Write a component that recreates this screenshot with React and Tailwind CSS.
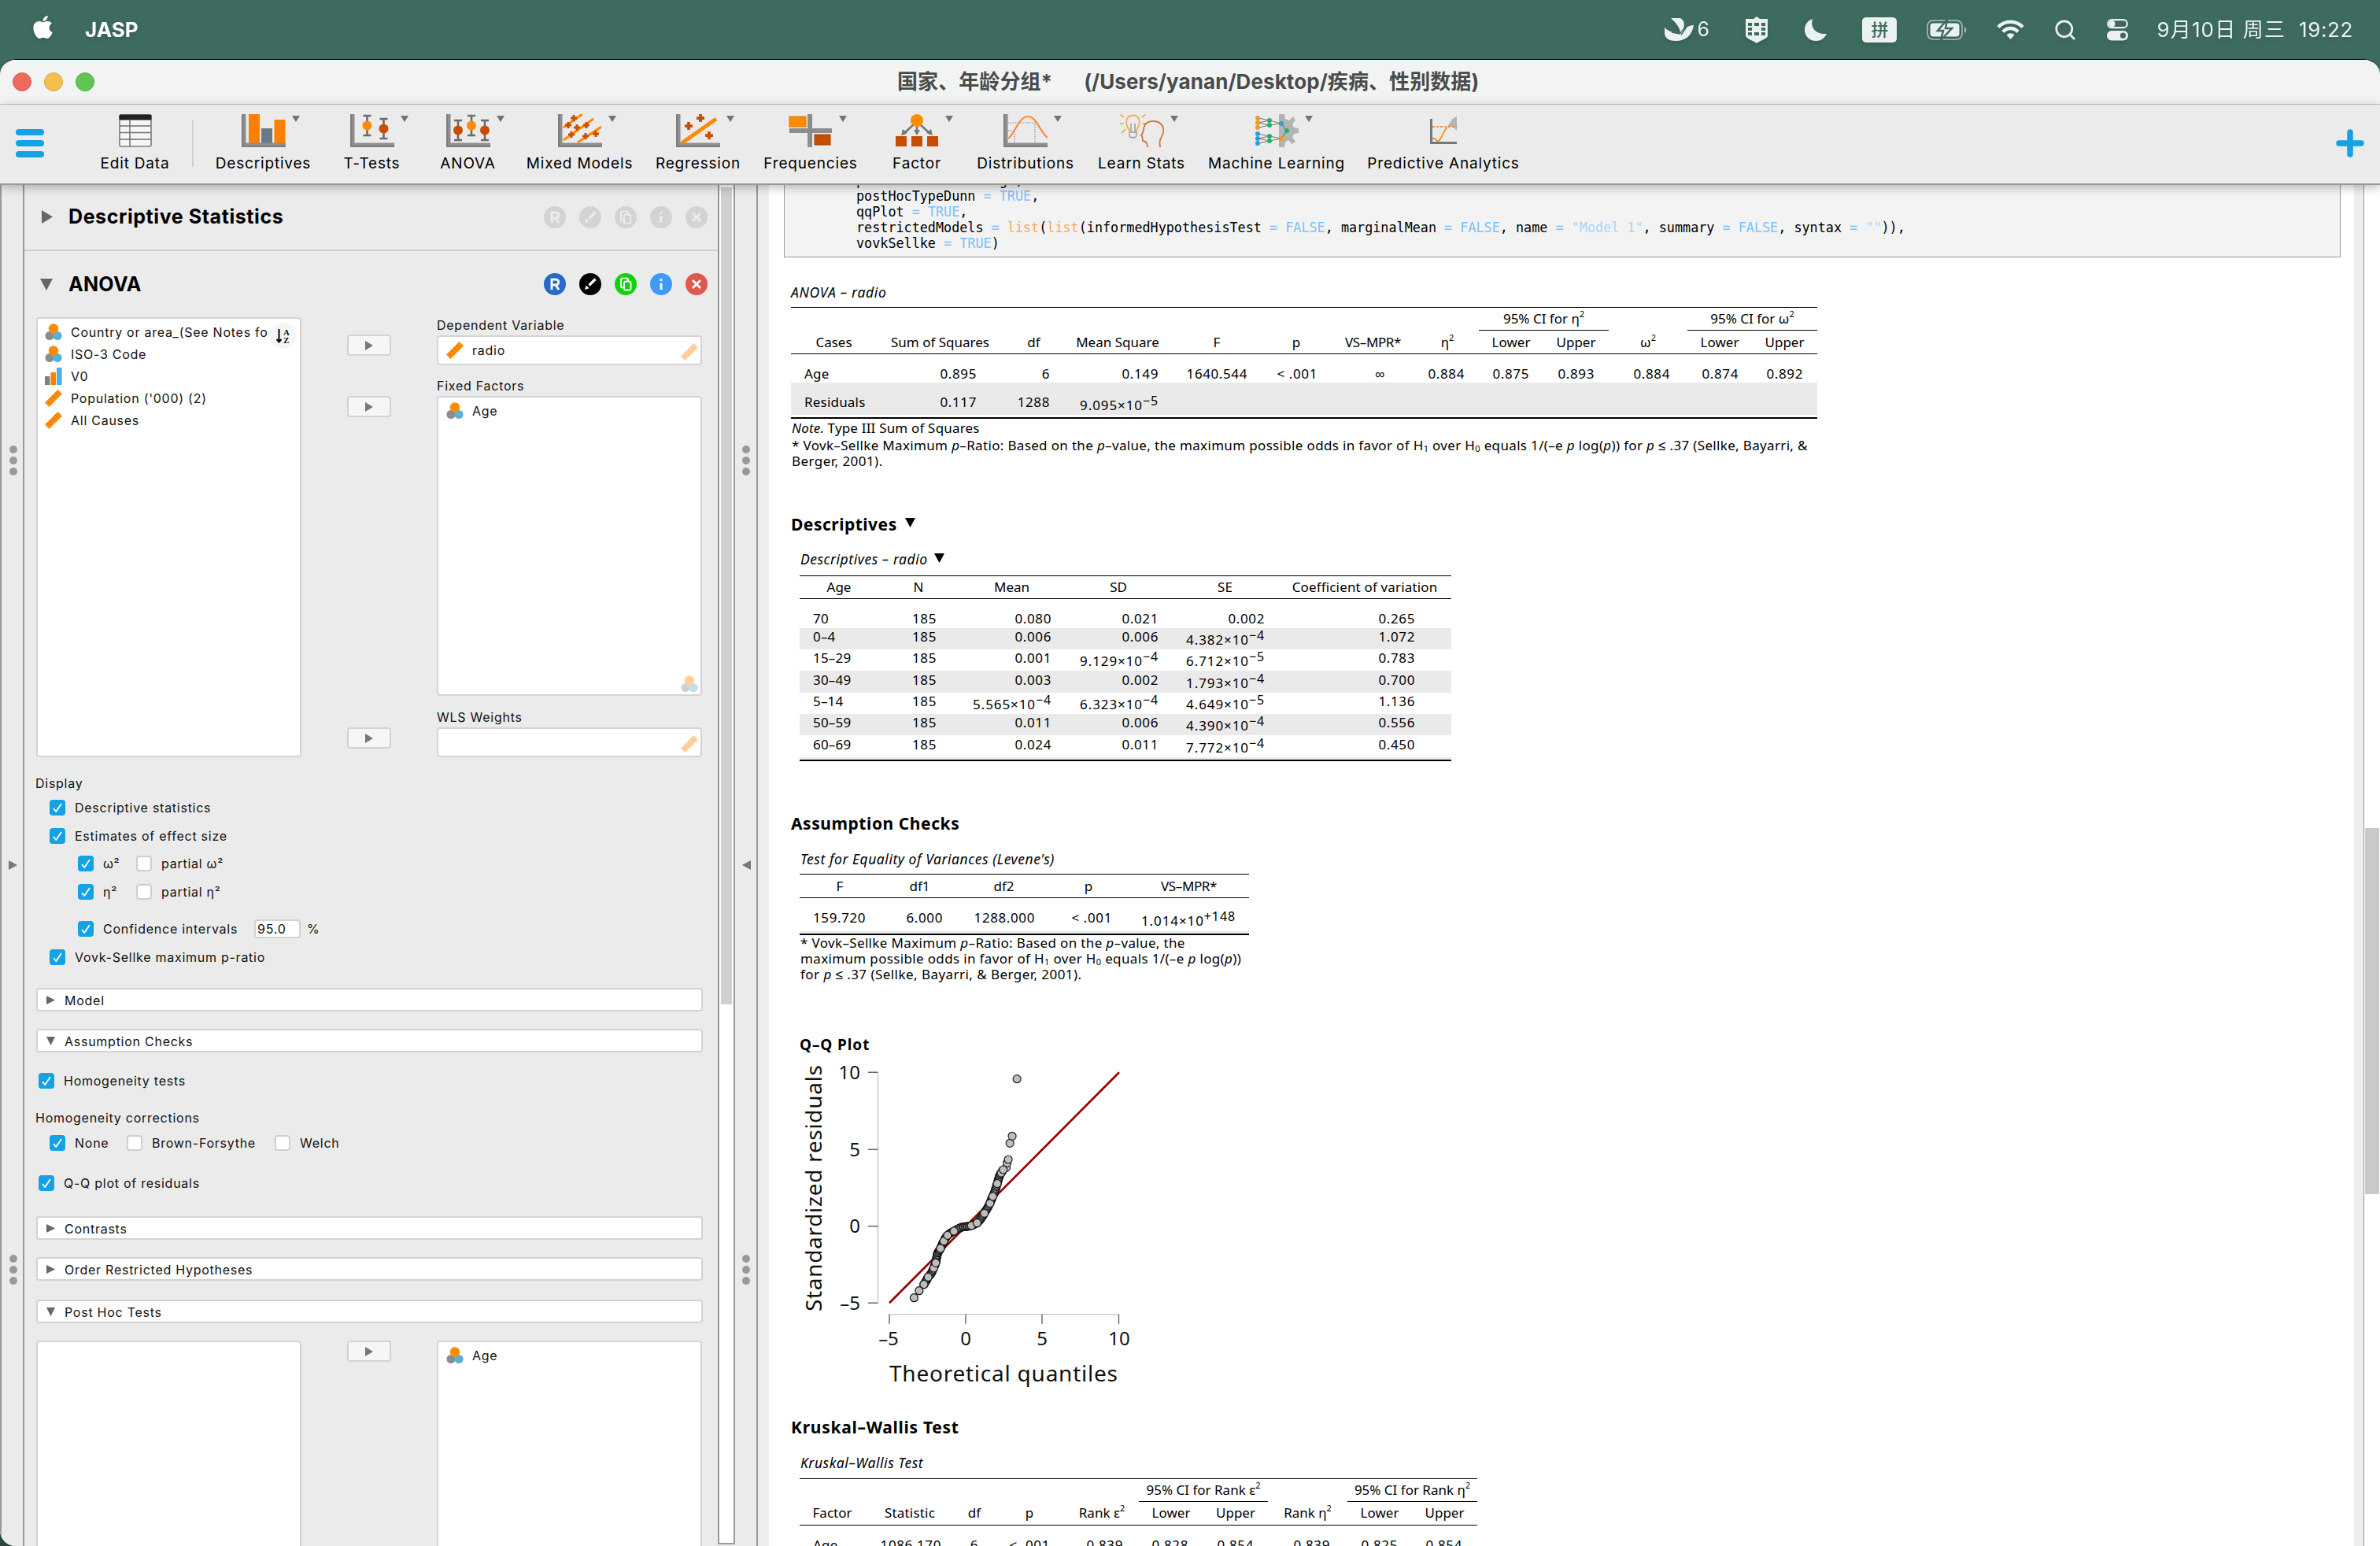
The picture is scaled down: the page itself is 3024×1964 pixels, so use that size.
import React from "react";
import { FaApple } from "react-icons/fa";
import { Search } from "lucide-react";

/* ---------- small shared drawings ---------- */

const Tri = ({ dir = "right", className = "text-[#666]", w = 14, h = 16 }) => (
  <svg width={w} height={h} viewBox="0 0 10 10" preserveAspectRatio="none" className={"shrink-0 " + className} fill="currentColor">
    {dir === "right" && <path d="M0 0 L10 5 L0 10 Z" />}
    {dir === "left" && <path d="M10 0 L0 5 L10 10 Z" />}
    {dir === "down" && <path d="M0 0 L10 0 L5 10 Z" />}
  </svg>
);

const Nominal = ({ className = "" }) => (
  <svg width="22" height="22" viewBox="0 0 22 22" className={"shrink-0 " + className}>
    <circle cx="6" cy="15.5" r="5.6" fill="#8c8c8c" />
    <circle cx="16" cy="15.5" r="5.6" fill="#56b1dc" />
    <circle cx="11" cy="6.5" r="6.2" fill="#ff8c00" />
  </svg>
);

const Ordinal = () => (
  <svg width="22" height="22" viewBox="0 0 22 22" className="shrink-0">
    <rect x="0" y="11" width="6.5" height="11" fill="#808080" />
    <rect x="7.5" y="6" width="6.5" height="16" fill="#ff8000" />
    <rect x="15" y="0" width="6.5" height="22" fill="#4fb0e0" />
  </svg>
);

const Scale = ({ className = "" }) => (
  <svg width="22" height="22" viewBox="0 0 22 22" className={"shrink-0 " + className}>
    <path d="M16.5 0 L22 5.5 L5.5 22 L0 16.5 Z" fill="#ff8c0a" />
    <path d="M13 4 l2.5 2.5 M9.5 7.5 l3.5 3.5 M6 11 l2.5 2.5 M3 14 l3 3" stroke="#c96400" strokeWidth="1" />
  </svg>
);

/* ---------- menu bar ---------- */

const MenuBar = () => (
  <div className="flex h-[75px] items-center bg-[#3e6b60] pr-[34px] pl-[38px] font-['Inter','Noto_Sans_CJK_SC',sans-serif] text-[26px] leading-none text-[#eaf1ee]">
    <FaApple className="-mt-[6px] size-[33px] text-white drop-shadow-md" />
    <span className="ml-[37px] font-bold text-white drop-shadow-md">JASP</span>
    <div className="ml-auto flex items-center drop-shadow-md">
      <svg width="37" height="30" viewBox="0 0 37 30" fill="currentColor">
        <path d="M8 0 H20 C25 3 26 8 24 13 L20 18 C19 11 14 6 8 0 Z" />
        <path d="M0 12 C5 17 12 19 20 20 C24 14 29 9 37 9 C35 22 27 29 14 29 C6 29 1 26 0 20 Z" />
        <path d="M21 21 L28 11 M9 18 L20 20" stroke="#3e6b60" strokeWidth="1.6" />
      </svg>
      <span className="ml-[4px] w-[16px] text-[25px]">6</span>
      <svg width="30" height="34" viewBox="0 0 30 34" className="ml-[45px]">
        <path d="M15 0 L19 3 H29 V24 C29 28 22 29 15 34 C8 29 1 28 1 24 V3 H11 Z" fill="currentColor" />
        <g fill="#3e6b60">
          <rect x="4" y="8" width="5" height="4" /><rect x="12" y="8" width="6" height="4" /><rect x="21" y="8" width="5" height="4" />
          <rect x="4" y="14" width="5" height="4" /><rect x="21" y="14" width="5" height="4" />
          <rect x="4" y="20" width="5" height="4" /><rect x="12" y="20" width="6" height="4" /><rect x="21" y="20" width="5" height="4" />
        </g>
      </svg>
      <svg width="28" height="28" viewBox="0 0 28 28" className="ml-[46px]" fill="currentColor">
        <path d="M10 0 C7 10 13 20 28 19 C25 25 20 28 14.500 28 C6 28 0 22 0 14 C0 7 4 2 10 0 Z" />
      </svg>
      <div className="ml-[45px] flex h-[32px] w-[44px] items-center justify-center rounded-[5px] bg-[#eaf1ee] text-[22px] font-medium text-[#3e6b60]">拼</div>
      <svg width="51" height="26" viewBox="0 0 51 26" className="ml-[38px]">
        <rect x="1" y="1" width="44" height="24" rx="7" fill="none" stroke="currentColor" strokeOpacity=".5" strokeWidth="2" />
        <rect x="4.500" y="4.500" width="37" height="17" rx="4" fill="currentColor" />
        <path d="M48 9 C51 10 51 16 48 17 Z" fill="currentColor" fillOpacity=".6" />
        <path d="M26 0 L14 14 H21 L18 26 L32 11 H24 Z" fill="currentColor" stroke="#3e6b60" strokeWidth="2.500" />
      </svg>
      <svg width="35" height="26" viewBox="0 0 35 26" className="ml-[38px]" fill="none" stroke="currentColor" strokeWidth="4.500">
        <path d="M2 9.500 C10 0.500 25 0.500 33 9.500" />
        <path d="M8 15.500 C13 9.500 22 9.500 27 15.500" />
        <path d="M17.500 25 L12.500 19.500 C15 16.500 20 16.500 22.500 19.500 Z" fill="currentColor" stroke="none" />
      </svg>
      <Search className="ml-[37px] size-[30px]" strokeWidth={2.2} />
      <svg width="27" height="28" viewBox="0 0 27 28" className="ml-[38px]">
        <rect x="1.200" y="1.200" width="24.600" height="10" rx="5" fill="none" stroke="currentColor" strokeWidth="2.200" />
        <circle cx="6.500" cy="6.200" r="4" fill="currentColor" />
        <rect x="0" y="15" width="27" height="12.500" rx="6.200" fill="currentColor" />
        <circle cx="20.500" cy="21.200" r="3.600" fill="#3e6b60" />
      </svg>
      <span className="ml-[36px] tracking-[1.150px] whitespace-nowrap">9月10日 周三</span>
      <span className="ml-[17px] tracking-[0.6px]">19:22</span>
    </div>
  </div>
);

const TitleBar = () => (
  <div className="flex h-[57px] items-center border-b border-[#c3c8c6] bg-[#f2f4f3] pl-[16px]">
    <div className="flex gap-[16px]">
      <div className="size-[24px] rounded-full border border-[#d8574c] bg-[#ed6a5e]" />
      <div className="size-[24px] rounded-full border border-[#dda63d] bg-[#f5bf4f]" />
      <div className="size-[24px] rounded-full border border-[#50ac42] bg-[#61c554]" />
    </div>
    <div className="ml-[1020px] flex gap-[40px] font-['Inter','Noto_Sans_CJK_SC',sans-serif] text-[26px] leading-none font-bold tracking-[0.080px] whitespace-pre text-[#4a4b4b]">
      <span>国家、年龄分组*</span>
      <span>(/Users/yanan/Desktop/疾病、性别数据)</span>
    </div>
  </div>
);

/* ---------- ribbon ---------- */

const Axes = ({ children }) => (
  <svg width="56" height="42" viewBox="0 0 56 42">
    {children}
    <path d="M0 0 H5.500 V36.500 H56 V42 H0 Z" fill="#8d8d8d" />
    <path d="M1 0 V41 H56" fill="none" stroke="#6f6f6f" strokeWidth="1" />
  </svg>
);

const Whisker = ({ x, y, h, c, r = 6 }) => (
  <g>
    <path d={`M${x} ${y} V${y + h} M${x - 5} ${y + 1} H${x + 5} M${x - 5} ${y + h - 1} H${x + 5}`} stroke="#6b6b6b" strokeWidth="2.600" />
    <circle cx={x} cy={y + h / 2} r={r} fill={c} />
  </g>
);

const Plus = ({ x, y, s = 4 }) => <path d={`M${x - s} ${y} H${x + s} M${x} ${y - s} V${y + s}`} stroke="#c84d00" strokeWidth={s * 0.75} />;

const EditDataIcon = () => (
  <svg width="42" height="42" viewBox="0 0 42 42">
    <rect x="1" y="1" width="40" height="40" rx="2" fill="#f6f6f6" stroke="#7d7d7d" strokeWidth="1.600" />
    <rect x="0.500" y="0.500" width="41" height="7" rx="1.500" fill="#222" />
    <path d="M1 15 H41 M1 23.500 H41 M1 32 H41 M14 7 V41" stroke="#6f6f6f" strokeWidth="1.500" />
  </svg>
);
const DescriptivesIcon = () => (
  <Axes>
    <rect x="9" y="0" width="14" height="37" fill="#ff8000" />
    <rect x="25" y="18" width="14" height="19" fill="#6b7b85" />
    <rect x="41.500" y="7" width="14" height="30" fill="#ff8000" />
  </Axes>
);
const TTestIcon = () => (
  <Axes>
    <Whisker x={21.500} y={1} h={27} c="#ff8c00" />
    <Whisker x={42.500} y={5} h={27} c="#c84d00" />
  </Axes>
);
const AnovaIcon = () => (
  <Axes>
    <Whisker x={15} y={7} h={27} c="#c84d00" />
    <Whisker x={32} y={1} h={27} c="#ff8c00" />
    <Whisker x={49} y={7} h={27} c="#c84d00" />
  </Axes>
);
const MixedIcon = () => (
  <Axes>
    <path d="M7 17 L31 0 M7 33 L45 6 M25 36 L55 16" stroke="#ff8c00" strokeWidth="3.200" />
    <Plus x={20} y={5} /><Plus x={13} y={14} /><Plus x={24} y={17} /><Plus x={36} y={14} />
    <Plus x={17} y={26} /><Plus x={35} y={28} /><Plus x={48} y={25} />
  </Axes>
);
const RegressionIcon = () => (
  <Axes>
    <path d="M7 37 L51 6" stroke="#ff8c00" strokeWidth="5" />
    <Plus x={31} y={5} s={5} /><Plus x={16} y={15} s={5} /><Plus x={42} y={27} s={5} />
  </Axes>
);
const FrequenciesIcon = () => (
  <svg width="56" height="42" viewBox="0 0 56 42">
    <rect x="1" y="18" width="54" height="6" fill="#8d8d8d" />
    <rect x="24" y="0" width="6" height="42" fill="#8d8d8d" />
    <rect x="1" y="3" width="21" height="13" fill="#ff8c00" stroke="#e07000" />
    <rect x="33" y="26" width="20" height="13" fill="#c84d00" stroke="#a84000" />
  </svg>
);
const FactorIcon = () => (
  <svg width="56" height="42" viewBox="0 0 56 42">
    <path d="M28 12 V25 M24 13 L11 25 M32 13 L45 25" stroke="#777" strokeWidth="2.600" />
    <path d="M24 20 L32 20 L28 27 Z M8 27 L10 19 L16 24 Z M48 27 L46 19 L40 24 Z" fill="#777" />
    <circle cx="28" cy="8" r="8" fill="#ff8c00" />
    <g fill="#c84d00"><rect x="1" y="28" width="14" height="13" /><rect x="21" y="28" width="14" height="13" /><rect x="41" y="28" width="14" height="13" /></g>
  </svg>
);
const DistributionsIcon = () => (
  <Axes>
    <path d="M6 11 H40 V36 M6 21 H14 V36" fill="none" stroke="#8a8a8a" strokeWidth="1.200" strokeDasharray="1.500 1.500" />
    <path d="M6 31 C14 25 20 3 31 3 C42 3 46 22 56 30" fill="none" stroke="#ff8c3a" strokeWidth="2.200" />
  </Axes>
);
const LearnIcon = () => (
  <svg width="56" height="42" viewBox="0 0 56 42" fill="none">
    <g stroke="#f4b04a" strokeWidth="1.800">
      <path d="M13 22 C8 15 7 11 9 6 C12 0 21 0 24 6 C26 11 24 15 20 22" />
      <path d="M0 0 L5 4 M0 12 H5 M2 24 L7 19 M33 0 L28 4 M34 12 H29" />
    </g>
    <path d="M12 23 H21 V27 C20 31 13 31 12 27 Z M14 12 V22 M19 12 V22" stroke="#aaa" strokeWidth="1.800" />
    <path d="M35 42 C35 37 34 35 29 34 C28 31 30 29 27 27 C31 23 29 16 33 12 C39 7 50 8 54 15 C58 23 52 29 51 33 C50 37 51 39 51 42" stroke="#d9733a" strokeWidth="1.800" />
  </svg>
);
const MLIcon = () => (
  <svg width="56" height="42" viewBox="0 0 56 42">
    <path d="M31 0 H38 L39 6 L44 8 L49 3 L52 8 L48 13 L50 17 L56 18 V24 L50 25 L48 29 L52 35 L48 38 L43 33 L39 36 L38 42 H31 Z" fill="#b3b3b3" />
    <path d="M5 5 L19 8 L34 12 M5 11 L19 8 M5 17 L19 14 L34 12 M5 11 L19 14 M34 12 L41 21 M5 25 L19 28 L34 31 M5 31 L19 28 M5 37 L19 34 L34 31 L41 21 M5 31 L19 34" stroke="#555" strokeWidth=".8" fill="none" />
    <g fill="#f39a1e"><circle cx="4" cy="5" r="3" /><circle cx="4" cy="11" r="3" /><circle cx="4" cy="17" r="3" /><circle cx="34" cy="31" r="3" /></g>
    <g fill="#24b26b"><circle cx="19" cy="8" r="3" /><circle cx="19" cy="14" r="3" /><circle cx="19" cy="28" r="3" /><circle cx="19" cy="34" r="3" /><circle cx="41" cy="21" r="3" /></g>
    <g fill="#28a0dc"><circle cx="4" cy="25" r="3" /><circle cx="4" cy="31" r="3" /><circle cx="4" cy="37" r="3" /><circle cx="34" cy="12" r="3" /></g>
  </svg>
);
const PredictiveIcon = () => (
  <svg width="34" height="42" viewBox="0 0 34 42">
    <path d="M22 17 C25 10 29 4 34 3 V22 C30 15 26 15 22 17 Z" fill="#b5b5b5" />
    <path d="M3 16 H34" stroke="#e0782a" strokeWidth="1.400" strokeDasharray="3 2" />
    <path d="M3 32 C7 28 8 36 11 34 C16 30 17 20 22 17" fill="none" stroke="#ff8c1a" strokeWidth="1.800" />
    <path d="M1.500 6 V36.500 H34" fill="none" stroke="#6b7a84" strokeWidth="3" />
  </svg>
);

const RIBBON = [
  ["Descriptives", DescriptivesIcon, "w-[149px]"],
  ["T-Tests", TTestIcon, "w-[127px]"],
  ["ANOVA", AnovaIcon, "w-[117px]"],
  ["Mixed Models", MixedIcon, "w-[167px]"],
  ["Regression", RegressionIcon, "w-[134px]"],
  ["Frequencies", FrequenciesIcon, "w-[152px]"],
  ["Factor", FactorIcon, "w-[118px]"],
  ["Distributions", DistributionsIcon, "w-[158px]"],
  ["Learn Stats", LearnIcon, "w-[137px]"],
  ["Machine Learning", MLIcon, "w-[206px]"],
  ["Predictive Analytics", PredictiveIcon, "w-[218px]"],
];

const RibbonItem = ({ label, Icon, width, arrow = true }) => (
  <div className={"flex shrink-0 flex-col items-center pt-[12px] " + width}>
    <div className="relative">
      <Icon />
      {arrow && <Tri dir="down" w={10} h={8} className="absolute top-[2px] -right-[18px] text-[#6b7680]" />}
    </div>
    <span className="mt-[9px] text-[19px] leading-[24px] tracking-[0.820px] whitespace-nowrap text-black">{label}</span>
  </div>
);

const Ribbon = () => (
  <div className="relative z-10 flex h-[102px] border-b-2 border-[#999] bg-[#ebebeb] shadow-[0_3px_12px_rgba(0,0,0,0.28)]">
    <div className="flex w-[98px] flex-col gap-[6px] pt-[31px] pl-[20px]">
      <div className="h-[8px] w-[36px] rounded-full bg-[#14a1e6]" />
      <div className="h-[8px] w-[36px] rounded-full bg-[#14a1e6]" />
      <div className="h-[8px] w-[36px] rounded-full bg-[#14a1e6]" />
    </div>
    <RibbonItem label="Edit Data" Icon={EditDataIcon} width="w-[147px]" arrow={false} />
    <div className="mt-[19px] mr-[14px] -ml-[1px] h-[60px] w-[2px] bg-[#cfcfcf]" />
    {RIBBON.map(([label, Icon, width]) => (
      <RibbonItem key={label} label={label} Icon={Icon} width={width} arrow={label !== "Predictive Analytics"} />
    ))}
    <svg width="36" height="36" viewBox="0 0 36 36" className="mt-[31px] mr-[20px] ml-auto" stroke="#14a1e6" strokeWidth="7.500" strokeLinecap="round">
      <path d="M4 18 H32 M18 4 V32" />
    </svg>
  </div>
);

/* ---------- analysis form ---------- */

const HEADER_COLORS = ["bg-[#2769c6]", "bg-black", "bg-[#13d10f]", "bg-[#3e9bfd]", "bg-[#dc594c]"];

const HeaderIcons = ({ active }) => {
  const glyphs = [
    <path key="r" d="M10 21 V8 H15 C20 8 20 15 15 15 H10 M15 15 L19 21" strokeWidth="3" />,
    <g key="e"><path d="M12.500 15.500 L20.500 7.500" strokeWidth="3.400" /><path d="M7.500 20.500 L9 16 L12 19 Z" fill="currentColor" strokeWidth="0.800" /></g>,
    <g key="c" strokeWidth="2"><rect x="8" y="6.500" width="9" height="12" rx="2" /><rect x="12" y="10.500" width="8.500" height="11" rx="2" className={active ? "fill-[#13d10f]" : "fill-[#d3d3d3]"} /></g>,
    <path key="i" d="M14 12.500 V21 M14 7 V10" strokeWidth="3" />,
    <path key="x" d="M9 9 L19 19 M19 9 L9 19" strokeWidth="3" />,
  ];
  return (
    <div className="ml-auto flex gap-[17px]">
      {glyphs.map((g, i) => (
        <div key={i} className={"size-[28px] rounded-full " + (active ? HEADER_COLORS[i] + " text-[#f4f4f4]" : "bg-[#d3d3d3] text-[#ebebeb]")}>
          <svg width="28" height="28" viewBox="0 0 28 28" fill="none" stroke="currentColor">{g}</svg>
        </div>
      ))}
    </div>
  );
};

const Check = ({ on, label, className = "" }) => (
  <div className={"flex h-[20px] items-center " + className}>
    {on ? (
      <div className="flex size-[20px] items-center justify-center rounded-[4px] bg-[#14a1e6]">
        <svg width="12" height="12" viewBox="0 0 12 12" fill="none" stroke="white" strokeWidth="1.800"><path d="M1 7 L4.200 11 L11 1" /></svg>
      </div>
    ) : (
      <div className="size-[20px] rounded-[4px] border-2 border-[#cfcfcf] bg-white" />
    )}
    <span className="ml-[12px] whitespace-nowrap">{label}</span>
  </div>
);

const Section = ({ open, label, className = "" }) => (
  <div className={"flex h-[30px] w-[847px] items-center rounded-[4px] border-2 border-[#d3d3d3] bg-white pt-[1px] pl-[11px] " + className}>
    <div className="flex w-[23px]"><Tri dir={open ? "down" : "right"} w={11} h={11} /></div>
    <span>{label}</span>
  </div>
);

const Move = ({ className = "" }) => (
  <div className={"flex h-[27px] w-[56px] items-center justify-center rounded-[4px] border-2 border-[#d3d3d3] bg-[#f5f6f8] " + className}>
    <Tri w={10} h={12} className="text-[#777]" />
  </div>
);

const Variable = ({ Icon, label }) => (
  <div className="flex h-[28px] items-center">
    <Icon />
    <span className="ml-[11px] whitespace-nowrap">{label}</span>
  </div>
);

const BOX = "rounded-[4px] border-2 border-[#d3d3d3] bg-white ";

const Form = () => (
  <div className="h-full w-[881px] overflow-hidden text-[16px] leading-none tracking-[0.740px] text-[#111]">
    <div className="flex h-[84px] items-center border-b-2 border-[#cdcdcd] pr-[13px] pb-[1px] pl-[22px] text-[25px]">
      <div className="w-[34px]"><Tri w={14} h={17} /></div>
      <span className="font-bold tracking-[0.580px] text-black">Descriptive Statistics</span>
      <HeaderIcons />
    </div>
    <div className="flex h-[84px] items-center pr-[13px] pl-[20px] text-[25px]">
      <div className="w-[36px]"><Tri dir="down" w={16} h={15} /></div>
      <span className="font-bold tracking-[0.300px] text-black">ANOVA</span>
      <HeaderIcons active />
    </div>
    <div className="pl-[14px]">
      <div className="flex pl-px">
        <div className={BOX + "relative h-[559px] w-[337px] overflow-hidden pt-[3px] pl-[9px]"}>
          <div className="w-[284px] overflow-hidden">
            <Variable Icon={Nominal} label="Country or area_(See Notes for" />
            <Variable Icon={Nominal} label="ISO-3 Code" />
            <Variable Icon={Ordinal} label="V0" />
            <Variable Icon={Scale} label="Population ('000) (2)" />
            <Variable Icon={Scale} label="All Causes" />
          </div>
          <div className="absolute top-[5px] right-[5px] flex size-[33px] items-center justify-center gap-[2px] rounded-full bg-[#f4f5f7]">
            <svg width="7" height="18" viewBox="0 0 7 18" stroke="black" strokeWidth="2" fill="none"><path d="M3.500 0 V16 M0.500 13 L3.500 16.500 L6.500 13" /></svg>
            <div className="flex flex-col font-['Liberation_Serif',serif] text-[11px] leading-[10px] font-bold tracking-[0px]"><span>A</span><span>Z</span></div>
          </div>
        </div>
        <div className="ml-[58px] w-[114px]">
          <Move className="mt-[22px]" />
          <Move className="mt-[51px]" />
          <Move className="mt-[394px]" />
        </div>
        <div className="w-[337px]">
          <div className="h-[23px] leading-[20px]">Dependent Variable</div>
          <div className={BOX + "flex h-[38px] items-center justify-between pr-[3px] pl-[10px]"}>
            <Variable Icon={Scale} label="radio" />
            <Scale className="mt-[4px] opacity-40" />
          </div>
          <div className="mt-[16px] h-[23px] leading-[21px]">Fixed Factors</div>
          <div className={BOX + "flex h-[381px] flex-col justify-between pt-[3px] pl-[10px]"}>
            <Variable Icon={Nominal} label="Age" />
            <Nominal className="mr-[3px] mb-[2px] self-end opacity-40" />
          </div>
          <div className="mt-[17px] h-[23px] leading-[20px]">WLS Weights</div>
          <div className={BOX + "flex h-[38px] items-center justify-end pr-[3px]"}>
            <Scale className="mt-[4px] opacity-40" />
          </div>
        </div>
      </div>

      <div className="mt-[22px] h-[22px] leading-[22px]">Display</div>
      <Check on label="Descriptive statistics" className="mt-[10px] ml-[18px]" />
      <Check on label="Estimates of effect size" className="mt-[16px] ml-[18px]" />
      <div className="mt-[15px] ml-[54px] flex">
        <Check on label="ω²" className="w-[74px]" />
        <Check label="partial ω²" />
      </div>
      <div className="mt-[16px] ml-[54px] flex">
        <Check on label="η²" className="w-[74px]" />
        <Check label="partial η²" />
      </div>
      <div className="mt-[25px] ml-[54px] flex h-[24px] items-center">
        <Check on label="Confidence intervals" className="w-[224px]" />
        <div className="flex h-[24px] w-[59px] items-center rounded-[4px] border-2 border-[#d3d3d3] bg-white pl-[2px]">95.0</div>
        <span className="ml-[8px]">%</span>
      </div>
      <Check on label="Vovk-Sellke maximum p-ratio" className="mt-[14px] ml-[18px]" />
      <Section label="Model" className="mt-[29px] ml-px" />
      <Section open label="Assumption Checks" className="mt-[22px] ml-px" />
      <Check on label="Homogeneity tests" className="mt-[26px] ml-[4px]" />
      <div className="mt-[27px] h-[21px] leading-[21px]">Homogeneity corrections</div>
      <div className="mt-[11px] ml-[18px] flex">
        <Check on label="None" className="w-[98px]" />
        <Check label="Brown-Forsythe" className="w-[188px]" />
        <Check label="Welch" />
      </div>
      <Check on label="Q-Q plot of residuals" className="mt-[31px] ml-[4px]" />
      <Section label="Contrasts" className="mt-[32px] ml-px" />
      <Section label="Order Restricted Hypotheses" className="mt-[22px] ml-px" />
      <Section open label="Post Hoc Tests" className="mt-[24px] ml-px" />
      <div className="mt-[22px] flex pl-px">
        <div className={BOX + "h-[300px] w-[337px]"} />
        <Move className="ml-[58px]" />
        <div className={BOX + "ml-[58px] h-[300px] w-[337px] pt-[3px] pl-[10px]"}>
          <Variable Icon={Nominal} label="Age" />
        </div>
      </div>
    </div>
  </div>
);

const Dots = () => (
  <div className="flex flex-col gap-[4px]">
    <div className="size-[10px] rounded-full bg-[#999]" />
    <div className="size-[10px] rounded-full bg-[#999]" />
    <div className="size-[10px] rounded-full bg-[#999]" />
  </div>
);

const Splitter = ({ dir, className }) => (
  <div className={"flex h-full shrink-0 flex-col items-center border-r-2 border-[#999] bg-[#ebebeb] pt-[331px] " + className}>
    <Dots />
    <Tri dir={dir} w={11} h={12} className="mt-[489px] mb-[489px] text-[#777]" />
    <Dots />
  </div>
);

/* ---------- results ---------- */

const K = ({ children }) => <span className="text-[#7cc0ff]">{children}</span>;
const Fn = ({ children }) => <span className="text-[#ffa657]">{children}</span>;
const Str = ({ children }) => <span className="text-[#a5d6ff]">{children}</span>;

const Code = () => (
  <div className="ml-[19px] h-[92px] w-[1978px] overflow-hidden border border-t-0 border-[#999] bg-[#f3f3f3] pl-[91px] font-['DejaVu_Sans_Mono',monospace] text-[16.770px] leading-[20px] whitespace-pre text-black">
    <div className="-mt-[16px]">postHocTerms <K>=</K> <K>~</K> Age,</div>
    <div>postHocTypeDunn <K>=</K> <K>TRUE</K>,</div>
    <div>qqPlot <K>=</K> <K>TRUE</K>,</div>
    <div>restrictedModels <K>=</K> <Fn>list</Fn>(<Fn>list</Fn>(informedHypothesisTest <K>=</K> <K>FALSE</K>, marginalMean <K>=</K> <K>FALSE</K>, name <K>=</K> <Str>"Model 1"</Str>, summary <K>=</K> <K>FALSE</K>, syntax <K>=</K> <Str>""</Str>)),</div>
    <div>vovkSellke <K>=</K> <K>TRUE</K>)</div>
  </div>
);

const Sup = ({ children }) => <span className="align-[8px] text-[11px] leading-[0]">{children}</span>;
const Sub = ({ children }) => <span className="align-[-2px] text-[11px] leading-[0]">{children}</span>;

/* A value cell; "4.382e-4" is written in scientific notation with a raised exponent. */
const Value = ({ v, className = "" }) => {
  const sci = typeof v === "string" && v.match(/^([\d.]+)e([-+]\d+)$/);
  if (sci) {
    return (
      <div className={"pt-[4px] text-right tracking-[0.9px] whitespace-nowrap " + className}>
        {sci[1]}×10<span className="align-[6px] text-[16px] leading-[0]">{sci[2].replace("-", "−")}</span>
      </div>
    );
  }
  return <div className={"text-right tracking-[0.6px] whitespace-nowrap " + className}>{v}</div>;
};

const Row = ({ cols, pads, cells, className }) => (
  <div className={"grid leading-[20px] " + cols + " " + className}>
    <div className="pl-[17px] tracking-[0.2px]">{cells[0]}</div>
    {cells.slice(1).map((v, i) => <Value key={i} v={v} className={pads[i]} />)}
  </div>
);

const Head = ({ cols, labels, className }) => (
  <div className={"grid text-center leading-[20px] whitespace-nowrap " + cols + " " + className}>
    {labels.map((l, i) => <div key={i}>{l}</div>)}
  </div>
);

const VovkNote = () => (
  <>* Vovk–Sellke Maximum <i>p</i>–Ratio: Based on the <i>p</i>–value, the</>
);

const A_COLS = "grid-cols-[109px_161px_77px_136px_116px_86px_109px_80px_82px_83px_100px_82px_83px]";
const A_PADS = ["pr-[34px]", "pr-[18px]", "pr-[16px]", "pr-[19px]", "pr-[16px]", "pr-[39px]", "pr-[18px]", "pr-[18px]", "pr-[18px]", "pr-[22px]", "pr-[17px]", "pr-[18px]"];

const AnovaTable = () => (
  <div className="w-[1304px]">
    <div className="h-[20px] text-[17.500px] leading-[20px] tracking-[0.700px] italic">ANOVA – radio</div>
    <div className="mt-[9px] border-t border-black">
      <div className={"grid h-[29px] text-center leading-[27px] whitespace-nowrap " + A_COLS}>
        <div className="col-span-2 col-start-9 border-b border-black">95% CI for η<Sup>2</Sup></div>
        <div className="col-span-2 col-start-12 border-b border-black">95% CI for ω<Sup>2</Sup></div>
      </div>
      <Head
        cols={A_COLS}
        className="h-[30px] border-b border-black pt-[5px]"
        labels={["Cases", "Sum of Squares", "df", "Mean Square", "F", "p", <span className="tracking-[-0.380px]">VS–MPR*</span>, <>η<Sup>2</Sup></>, "Lower", "Upper", <>ω<Sup>2</Sup></>, "Lower", "Upper"]}
      />
      <Row cols={A_COLS} pads={A_PADS} className="h-[36px] pt-[15px]" cells={["Age", "0.895", "6", "0.149", "1640.544", "< .001", "∞", "0.884", "0.875", "0.893", "0.884", "0.874", "0.892"]} />
      <Row cols={A_COLS} pads={A_PADS} className="h-[41px] bg-[#eaeaea] pt-[15px]" cells={["Residuals", "0.117", "1288", "9.095e-5", "", "", "", "", "", "", "", "", ""]} />
      <div className="h-[5px] border-b-2 border-black" />
    </div>
    <div className="mt-[2px] h-[20px] pl-[1px] leading-[20px] tracking-[0.180px] whitespace-nowrap"><i>Note.</i> Type III Sum of Squares</div>
    <div className="mt-[1px] h-[21px] pl-[1px] leading-[21px] tracking-[0.340px] whitespace-nowrap"><VovkNote /> maximum possible odds in favor of H<Sub>1</Sub> over H<Sub>0</Sub> equals 1/(–e <i>p</i> log(<i>p</i>)) for <i>p</i> ≤ .37 (Sellke, Bayarri, &amp;</div>
    <div className="mb-[1px] h-[20px] pl-[1px] leading-[20px] tracking-[0.450px]">Berger, 2001).</div>
  </div>
);

const D_COLS = "grid-cols-[100px_102px_135px_136px_135px_220px]";
const D_PADS = ["pr-[28px]", "pr-[17px]", "pr-[17px]", "pr-[17px]", "pr-[46px]"];
const D_ROWS = [
  ["h-[37px] pt-[15px]", ["70", "185", "0.080", "0.021", "0.002", "0.265"]],
  ["h-[27px] pt-[1px] bg-[#eaeaea]", ["0–4", "185", "0.006", "0.006", "4.382e-4", "1.072"]],
  ["h-[27px] pt-[1px]", ["15–29", "185", "0.001", "9.129e-4", "6.712e-5", "0.783"]],
  ["h-[28px] pt-[2px] bg-[#eaeaea]", ["30–49", "185", "0.003", "0.002", "1.793e-4", "0.700"]],
  ["h-[27px] pt-[1px]", ["5–14", "185", "5.565e-4", "6.323e-4", "4.649e-5", "1.136"]],
  ["h-[27px] pt-[1px] bg-[#eaeaea]", ["50–59", "185", "0.011", "0.006", "4.390e-4", "0.556"]],
  ["h-[28px] pt-[2px]", ["60–69", "185", "0.024", "0.011", "7.772e-4", "0.450"]],
];

const DescriptivesTable = () => (
  <div className="mt-[11px] ml-[11px] w-[828px] border-t border-black">
    <Head cols={D_COLS} className="h-[29px] border-b border-black pt-[4px]" labels={["Age", "N", "Mean", "SD", "SE", <span className="tracking-[0.160px]">Coefficient of variation</span>]} />
    {D_ROWS.map(([cls, cells]) => <Row key={cells[0]} cols={D_COLS} pads={D_PADS} className={cls} cells={cells} />)}
    <div className="h-[5px] border-b-2 border-black bg-[#eaeaea]" />
  </div>
);

const L_COLS = "grid-cols-[102px_101px_113px_102px_153px]";

const LeveneTable = () => (
  <div className="mt-[9px] ml-[11px] w-[571px] border-t border-black">
    <Head cols={L_COLS} className="h-[30px] border-b border-black pt-[5px]" labels={["F", "df1", "df2", "p", <span className="tracking-[-0.380px]">VS–MPR*</span>]} />
    <Row cols={L_COLS} pads={["pr-[21px]", "pr-[17px]", "pr-[21px]", "pr-[17px]"]} className="h-[42px] pt-[15px]" cells={[<span className="tracking-[0.6px]">159.720</span>, "6.000", "1288.000", "< .001", "1.014e+148"]} />
    <div className="h-[5px] border-b-2 border-black bg-[#eaeaea]" />
  </div>
);

/* Quantile curve: anchor points on a 1568 x 1500 grid laid over the chart; the dense run between them is interpolated. */
const CURVE = [[508,1076],[526,1049],[543,1025],[552,1010],[558,997],[568,985],[574,972],[580,957],[585,943],[588,925],[592,905],[602,888],[608,872],[614,860],[620,848],[627,838],[638,829],[650,822],[664,813],[680,806],[698,804],[712,801],[732,791],[742,780],[750,768],[758,754],[768,736],[778,716],[783,702],[788,690],[794,675],[799,658],[804,641],[808,625],[813,608],[818,600],[825,588]];
const CLEAR = [[836,580],[839,562],[843,549],[849,487],[857,460],[874,242],[543,1025],[558,997],[578,963],[585,943],[602,888],[614,860],[627,838],[650,822],[712,801],[732,791],[758,754],[778,716],[788,690],[804,641],[818,600],[825,588]];
const toX = (x) => x * 0.35714 - 36;
const toY = (y) => y / 3 - 47;
const DENSE = CURVE.slice(0, 3).concat(
  CURVE.slice(2).flatMap(([x, y], i, a) => {
    if (i === a.length - 1) return [];
    const [nx, ny] = a[i + 1];
    const n = Math.ceil(Math.hypot(nx - x, ny - y) / 6);
    return Array.from({ length: n }, (_, k) => [x + ((nx - x) * k) / n, y + ((ny - y) * k) / n]);
  })
);

const QQPlot = () => (
  <svg width="460" height="466" viewBox="0 0 460 466" className="ml-[11px] block font-['Noto_Sans',sans-serif] text-[24px]" fill="#111">
    <path d="M99.500 25.300 V318.500 M114 332.700 H406" stroke="#ccc" strokeWidth="1.500" />
    <path d="M87 25.300 H99.500 M87 123.300 H99.500 M87 220.700 H99.500 M87 318.300 H99.500" stroke="#666" strokeWidth="1.400" />
    <path d="M114 332.700 V344.700 M211 332.700 V344.700 M308 332.700 V344.700 M405.500 332.700 V344.700" stroke="#666" strokeWidth="1.400" />
    <path d="M114 318.300 L406 25.300" stroke="#990000" strokeWidth="2.700" />
    {DENSE.map(([x, y], i) => <circle key={i} cx={toX(x)} cy={toY(y)} r="5" fill="#bebebe" stroke="#111" strokeWidth="1.200" />)}
    {CLEAR.map(([x, y], i) => <circle key={i} cx={toX(x)} cy={toY(y)} r="5" fill="#bebebe" stroke="#222" strokeWidth="1.200" />)}
    <g textAnchor="end">
      <text x="77" y="34">10</text><text x="77" y="132">5</text><text x="77" y="229">0</text><text x="77" y="327">–5</text>
    </g>
    <g textAnchor="middle">
      <text x="113" y="372">–5</text><text x="211" y="372">0</text><text x="308" y="372">5</text><text x="406" y="372">10</text>
    </g>
    <text x="114" y="418" fontSize="28" textLength="290" lengthAdjust="spacing">Theoretical quantiles</text>
    <text transform="translate(27.500 329) rotate(-90)" fontSize="28" textLength="313" lengthAdjust="spacing">Standardized residuals</text>
  </svg>
);

const W_COLS = "grid-cols-[83px_114px_50px_90px_94px_82px_82px_101px_82px_83px]";
const W_PADS = ["pr-[17px]", "pr-[20px]", "pr-[19px]", "pr-[20px]", "pr-[19px]", "pr-[18px]", "pr-[22px]", "pr-[18px]", "pr-[19px]"];

const KruskalTable = () => (
  <div className="mt-[10px] ml-[11px] w-[861px] border-t border-black">
    <div className={"grid h-[29px] text-center leading-[27px] whitespace-nowrap " + W_COLS}>
      <div className="col-span-2 col-start-6 border-b border-black">95% CI for Rank ε<Sup>2</Sup></div>
      <div className="col-span-2 col-start-9 border-b border-black">95% CI for Rank η<Sup>2</Sup></div>
    </div>
    <Head cols={W_COLS} className="h-[30px] border-b border-black pt-[4px]" labels={["Factor", <span className="tracking-[0.180px]">Statistic</span>, "df", "p", <>Rank ε<Sup>2</Sup></>, "Lower", "Upper", <>Rank η<Sup>2</Sup></>, "Lower", "Upper"]} />
    <Row cols={W_COLS} pads={W_PADS} className="pt-[15px]" cells={["Age", "1086.170", "6", "< .001", "0.839", "0.828", "0.854", "0.839", "0.825", "0.854"]} />
  </div>
);

const Heading = ({ children, className = "tracking-[0.500px]" }) => (
  <div className={"h-[20px] text-[21px] leading-[20px] font-bold whitespace-nowrap " + className}>{children}</div>
);
const Caption = ({ children, className = "" }) => (
  <div className={"ml-[12px] h-[20px] text-[17.500px] leading-[20px] tracking-[0.540px] whitespace-nowrap italic " + className}>{children}</div>
);

const Results = () => (
  <div className="h-full w-[2014px] overflow-hidden bg-white font-['Noto_Sans',sans-serif] text-[17px] text-black">
    <Code />
    <div className="mt-[34px] ml-[28px]">
      <AnovaTable />
      <div className="mt-[60px] flex items-start">
        <Heading>Descriptives</Heading>
        <Tri dir="down" w={13} h={12} className="mt-[2px] ml-[10px] text-black" />
      </div>
      <div className="mt-[24px] flex items-start">
        <Caption>Descriptives – radio</Caption>
        <Tri dir="down" w={13} h={12} className="mt-[3px] ml-[8px] text-black" />
      </div>
      <DescriptivesTable />
      <Heading className="mt-[69px] tracking-[0.560px]">Assumption Checks</Heading>
      <Caption className="mt-[25px]">Test for Equality of Variances (Levene's)</Caption>
      <LeveneTable />
      <div className="mb-[1px] ml-[12px] leading-[20px] tracking-[0.350px] whitespace-nowrap">
        <div><VovkNote /></div>
        <div>maximum possible odds in favor of H<Sub>1</Sub> over H<Sub>0</Sub> equals 1/(–e <i>p</i> log(<i>p</i>))</div>
        <div className="tracking-[0.450px]">for <i>p</i> ≤ .37 (Sellke, Bayarri, &amp; Berger, 2001).</div>
      </div>
      <div className="mt-[69px] ml-[11px] h-[20px] text-[19px] leading-[20px] font-bold tracking-[0.900px]">Q–Q Plot</div>
      <QQPlot />
      <Heading className="tracking-[0.720px]">Kruskal–Wallis Test</Heading>
      <Caption className="mt-[25px]">Kruskal–Wallis Test</Caption>
      <KruskalTable />
    </div>
  </div>
);

export default function App() {
  return (
    <div className="h-[1964px] w-[3024px] overflow-hidden bg-[#2b473f] font-['Inter',sans-serif]">
      <MenuBar />
      <div className="bg-gradient-to-b from-[#3e6b60] from-50% to-[#2b473f] to-50%">
        <div className="h-[1889px] overflow-hidden rounded-t-[20px] rounded-bl-[20px] border-t border-black bg-[#ebebeb]">
          <TitleBar />
          <Ribbon />
          <div className="flex h-[1729px]">
            <Splitter dir="right" className="w-[31px] border-l-2 pl-[2px]" />
            <Form />
            <div className="h-[1727px] w-[22px] shrink-0 border-x-2 border-b-2 border-[#999] bg-white px-[2px]">
              <div className="mt-[3px] h-[1038px] bg-[#d0d0d0]" />
            </div>
            <Splitter dir="left" className="w-[29px] pl-[1px]" />
            <div className="h-full w-[14px] shrink-0 bg-[#eee]" />
            <Results />
            <div className="h-full w-[12px] shrink-0 bg-[#eee]" />
            <div className="h-full w-[21px] shrink-0 border-l border-[#999] bg-white px-px">
              <div className="mt-[817px] h-[465px] bg-[#c9c9c9]" />
            </div>
          </div>
        </div>
      </div>
    </div>
  );
}
